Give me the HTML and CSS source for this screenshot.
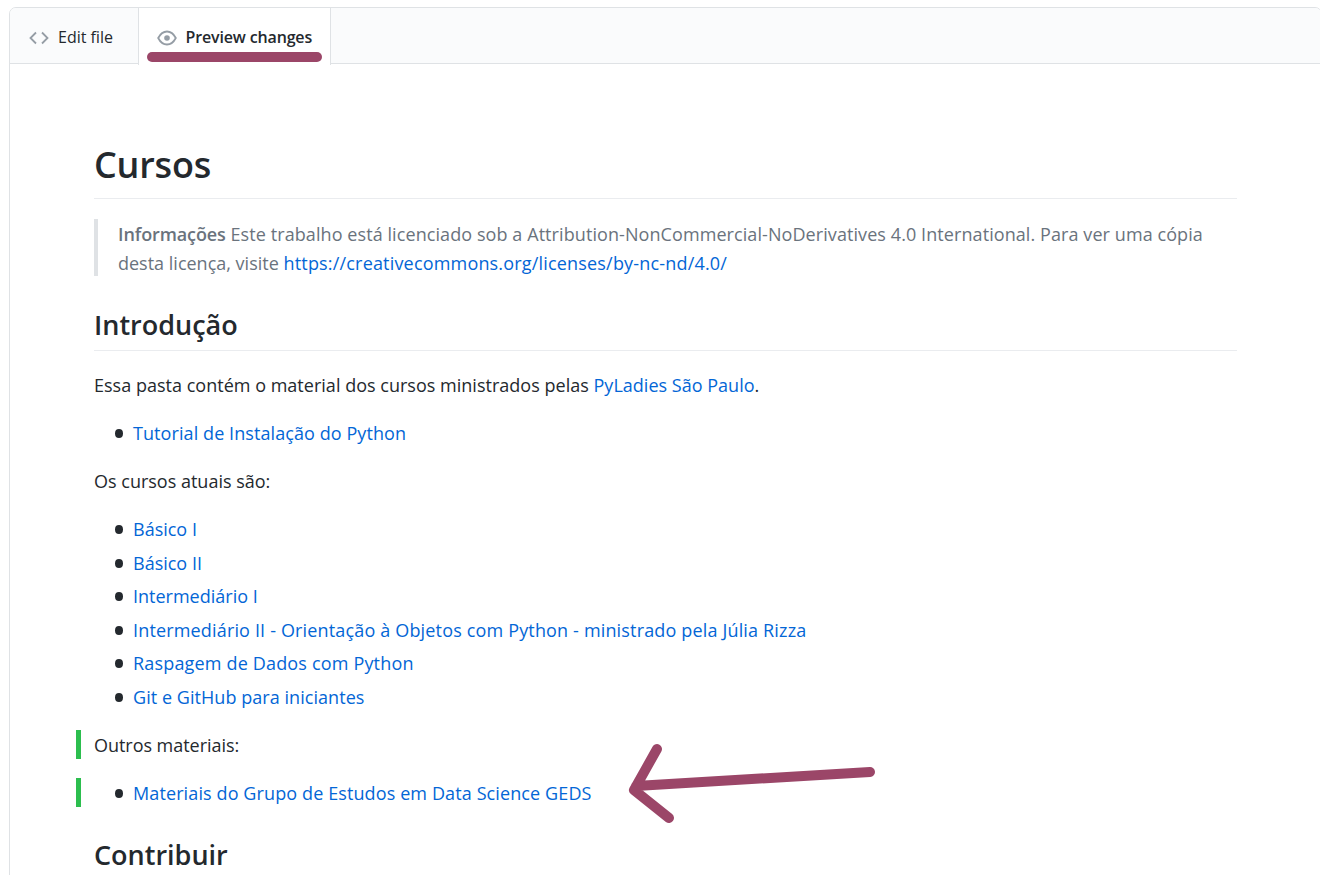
FILE: index.html
```html
<!DOCTYPE html>
<html lang="pt-BR">
<head>
<meta charset="utf-8">
<title>Cursos</title>
<link rel="stylesheet" href="styles.css">
</head>
<body>
<div class="editor">
  <nav class="tabs">
    <a class="tab tab-edit"><svg class="icon" viewBox="0 0 20 16" fill="none" stroke="#959da5" stroke-width="1.8"><path d="M7 2.5 1.5 8 7 13.5M13 2.5 18.5 8 13 13.5"/></svg><span>Edit file</span></a>
    <a class="tab selected"><svg class="icon" viewBox="0 0 20 16" fill="none" stroke="#959da5" stroke-width="1.8"><path d="M1.2 8C3 4.5 6.2 1.5 10 1.5S17 4.5 18.8 8C17 11.5 13.8 14.5 10 14.5S3 11.5 1.2 8Z"/><circle cx="10" cy="8" r="2.8" fill="#959da5" stroke="none"/></svg><span>Preview changes</span><i class="underline"></i></a>
  </nav>
  <article class="markdown">
    <h1>Cursos</h1>
    <blockquote>
      <div><strong>Informações</strong><span class="license"> Este trabalho está licenciado sob a Attribution-NonCommercial-NoDerivatives 4.0 International. Para ver uma cópia</span></div>
      <div>desta licença, visite <a class="url">https://creativecommons.org/licenses/by-nc-nd/4.0/</a></div>
    </blockquote>
    <h2>Introdução</h2>
    <p class="intro">Essa pasta contém o material dos cursos ministrados pelas <a>PyLadies São Paulo</a>.</p>
    <ul><li><a class="tutorial">Tutorial de Instalação do Python</a></li></ul>
    <p>Os cursos atuais são:</p>
    <ul>
      <li><a>Básico I</a></li>
      <li><a>Básico II</a></li>
      <li><a>Intermediário I</a></li>
      <li><a class="objects">Intermediário II - Orientação à Objetos com Python - ministrado pela Júlia Rizza</a></li>
      <li><a class="scraping">Raspagem de Dados com Python</a></li>
      <li><a class="git">Git e GitHub para iniciantes</a></li>
    </ul>
    <p class="added">Outros materiais:</p>
    <ul class="added"><li><a class="geds">Materiais do Grupo de Estudos em Data Science GEDS</a></li></ul>
    <h2 class="contribute">Contribuir</h2>
  </article>
</div>
<svg class="arrow" viewBox="0 0 250 84" fill="none" stroke="#9b4668" stroke-width="10" stroke-linecap="round" stroke-linejoin="round"><path d="M243 32 9 46M30 9 7 50 42 78"/></svg>
</body>
</html>
```
FILE: styles.css
```css
* { box-sizing: border-box; }
body { margin: 0; width: 1320px; height: 875px; overflow: hidden; position: relative; background: #fff; color: #24292e; font: 18px/28.8px "Open Sans", sans-serif; }
.editor { margin: 7px 0 0 9px; width: 1313px; height: 900px; border: 1px solid #dfe2e5; border-radius: 7px 7px 0 0; }
.tabs { display: flex; height: 56px; background: #fafbfc; border-bottom: 1px solid #dfe2e5; border-radius: 6px 6px 0 0; font-size: 16px; }
.tab { display: flex; align-items: center; gap: 9px; padding: 2px 0 0 19px; height: 57px; position: relative; }
.tab-edit { width: 129px; border-right: 1px solid #dfe2e5; }
.selected { width: 192px; gap: 8.5px; padding-left: 18px; background: #fff; border-right: 1px solid #dfe2e5; font-weight: 600; letter-spacing: -0.15px; }
.icon { width: 20px; height: 16px; }
.underline { position: absolute; left: 8px; top: 44px; width: 175px; height: 10px; border-radius: 5px; background: #9b4668; }
.markdown { width: 1143px; margin: 78px 0 0 84px; }
h1, h2, p, ul, blockquote { margin: 0; }
h1 { height: 57px; font-size: 36px; line-height: 46px; font-weight: 600; letter-spacing: -0.2px; border-bottom: 1px solid #eaecef; }
h2 { height: 46px; margin: 29px 0 20px; font-size: 27px; line-height: 40px; font-weight: 600; border-bottom: 1px solid #eaecef; }
.contribute { line-height: 38px; }
blockquote { margin-top: 20px; height: 57px; padding: 1px 0 0 20px; border-left: 4px solid #dfe2e5; color: #6a737d; white-space: nowrap; line-height: 29px; }
strong { font-weight: 600; letter-spacing: -0.1px; }
a { color: #0366d6; }
.tab { color: #24292e; }
.license { letter-spacing: 0.08px; }
.url { letter-spacing: 0.18px; }
.intro { letter-spacing: 0.015px; }
.tutorial { letter-spacing: 0.08px; }
.objects { letter-spacing: 0.16px; }
.scraping { letter-spacing: 0.17px; }
.git { letter-spacing: 0.05px; }
.geds { letter-spacing: 0.11px; }
p, ul { margin-bottom: 19.2px; }
ul { list-style: none; padding-left: 39px; }
li { position: relative; white-space: nowrap; }
li + li { margin-top: 4.8px; }
li::before { content: ""; position: absolute; left: -18.5px; top: 10px; width: 8.5px; height: 9px; border-radius: 50%; background: #24292e; }
.added { height: 28.8px; margin-left: -18px; border-left: 5px solid #2cbe4e; padding: 0.8px 0 0 13px; }
p.added { margin-top: -0.8px; letter-spacing: -0.04px; }
ul.added { padding-left: 52px; }
.arrow { position: absolute; left: 627px; top: 740px; width: 250px; height: 84px; }
```
